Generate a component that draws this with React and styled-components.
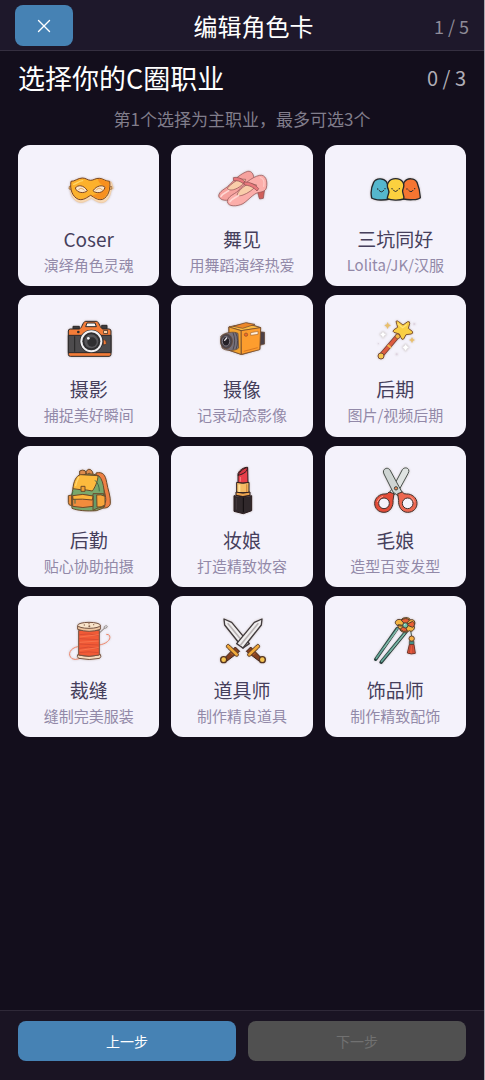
import React, { useState } from 'react';
import styled, { createGlobalStyle } from 'styled-components';
import { X } from 'lucide-react';

const MaskIcon = () => (
  <svg viewBox="158 69 156 156">
    <path d="M184 128C194 126 205 118 217 118C228 118 233 124 243 124C252 124 260 115 272 117C284 118 292 124 303 126L309 145L302 152C300 168 292 183 280 187C264 191 254 180 243 175C232 180 220 191 204 186C188 180 180 163 180 150Z" fill="#f7d9b5" stroke="#f3c99a" strokeWidth="2" />
    <path d="M177 139L184 141V149L176 147ZM304 139L297 141V149L305 147Z" fill="#f3c178" stroke="#8a5a35" strokeWidth="2" />
    <path d="M182 124C192 125 203 114 216 114C227 114 232 121 241 121C250 121 256 114 267 115C279 116 285 124 298 124C301 146 295 170 277 178C262 182 252 172 241 166C230 172 220 182 204 178C186 170 178 148 182 124Z" fill="#fcb12c" stroke="#7a4424" strokeWidth="3" strokeLinejoin="round" />
    <path d="M263 117C279 117 285 125 296 126C298 146 292 168 276 176C263 179 254 171 246 167C258 160 284 158 282 144C280 134 264 132 263 117Z" fill="#f8901f" />
    <path d="M190 133C198 131 206 123 217 122" fill="none" stroke="#ffd76a" strokeWidth="4" strokeLinecap="round" />
    <path d="M195 144C202 134 220 134 231 152C222 161 200 160 195 144ZM284 142C276 134 260 136 248 152C257 162 280 160 284 142Z" fill="#fbe7cb" stroke="#7a4424" strokeWidth="3" />
    <path d="M204 150C210 143 216 144 222 151M257 151C263 143 270 143 276 150" fill="none" stroke="#e2a25e" strokeWidth="3" />
  </svg>
);

const ShoesIcon = () => (
  <svg viewBox="153 69 156 156">
    <g stroke="#8a4a4d" strokeWidth="2" strokeLinejoin="round">
      <path d="M161 168C162 153 180 148 192 136C208 119 228 100 248 94C259 92 266 102 266 113L262 134L235 150L202 175C188 185 164 182 161 168Z" fill="#f6a29e" />
      <path d="M188 143C198 133 210 123 224 117L242 118C238 132 222 144 206 149C197 151 186 150 188 143Z" fill="#f9cda9" />
      <path d="M205 113C218 110 232 116 239 125L235 131C226 124 216 121 206 122Z" fill="#e9797c" />
      <path d="M277 155L299 147L295 175L284 177C280 170 281 163 277 155Z" fill="#d0605b" />
      <path d="M187 185C188 168 207 164 219 153C235 134 260 111 284 106C302 103 309 123 304 144C301 155 288 156 279 158C264 162 252 179 234 191C216 200 189 201 187 185Z" fill="#fbaeaa" />
      <path d="M217 162C223 149 238 137 254 130L275 135C265 149 248 160 234 165C226 168 215 169 217 162Z" fill="#f9cda9" />
      <path d="M237 126C254 125 272 134 281 146L276 153C265 141 252 136 238 135Z" fill="#e9797c" />
    </g>
    <path d="M168 169C172 160 183 158 191 152M195 185C200 175 212 173 221 166" fill="none" stroke="#ffd7d3" strokeWidth="5" strokeLinecap="round" />
    <path d="M286 113C296 115 299 126 296 139" fill="none" stroke="#fdc8c4" strokeWidth="4" strokeLinecap="round" />
  </svg>
);

const FriendsIcon = () => (
  <svg viewBox="154 69 156 156">
    <g stroke="#25292d" strokeWidth="4" strokeLinejoin="round">
      <path d="M162 174C159 160 162 139 168 127C175 114 197 113 206 125C213 137 216 160 216 177C202 181 174 182 162 174Z" fill="#55b7cd" />
      <path d="M258 177C252 161 251 140 260 126C268 113 291 113 298 127C303 139 307 158 308 173C300 180 274 181 258 177Z" fill="#f57531" />
      <path d="M209 176C209 164 218 158 212 148C204 133 214 116 234 116C254 116 263 132 256 147C250 158 262 165 258 177C244 182 221 181 209 176Z" fill="#fbd13f" />
    </g>
    <g fill="none" stroke="#25292d" strokeWidth="3" strokeLinecap="round">
      <path d="M184 151Q192 161 198 151M227 150Q234 160 240 150M273 151Q280 160 286 151" />
    </g>
    <g fill="#25292d">
      <circle cx="180" cy="147" r="2" /><circle cx="202" cy="146" r="2" />
      <circle cx="223" cy="146" r="2" /><circle cx="245" cy="146" r="2" />
      <circle cx="268" cy="147" r="2" /><circle cx="291" cy="146" r="2" />
    </g>
  </svg>
);

const CameraIcon = () => (
  <svg viewBox="158 69 156 156">
    <g stroke="#2c2a2b" strokeWidth="3" strokeLinejoin="round">
      <path d="M188 109H207V117H188ZM274 106H290V118H274Z" fill="#3f3d3e" />
      <path d="M174 123Q174 117 180 117H206C215 117 217 94 226 94H258C267 94 269 117 278 117H296Q302 117 302 123V193Q302 199 296 199H180Q174 199 174 193Z" fill="#f47c38" />
      <path d="M174 136H302V188H174Z" fill="#4d4b4d" />
      <path d="M230 99H254L258 110H226Z" fill="#faf6f3" />
    </g>
    <path d="M193 139V185" stroke="#252425" strokeWidth="3" />
    <circle cx="204" cy="126" r="4" fill="#2c2a2b" />
    <rect x="280" y="122" width="12" height="8" fill="#ffd3a7" stroke="#2c2a2b" strokeWidth="2" />
    <path d="M279 148Q289 150 288 160Q286 165 279 165Z" fill="#f47c38" stroke="#2c2a2b" strokeWidth="2" />
    <circle cx="243" cy="154" r="35" fill="#2c2a2b" />
    <circle cx="243" cy="154" r="33" fill="#f1f0f2" />
    <circle cx="243" cy="154" r="27" fill="#2f2e30" />
    <circle cx="243" cy="154" r="21" fill="#565558" />
    <circle cx="245" cy="156" r="14" fill="#2f2e30" />
    <circle cx="234" cy="145" r="4" fill="#f4f4f7" />
  </svg>
);

const CamcorderIcon = () => (
  <svg viewBox="153 69 156 156">
    <g stroke="#67452f" strokeWidth="2" strokeLinejoin="round">
      <path d="M284 125L299 127V162L284 166Z" fill="#4c4147" />
      <path d="M191 111L246 99L287 113L285 178L230 194L192 181Z" fill="#e98527" />
      <path d="M192 111L246 101L287 113L230 122Z" fill="#fbba43" />
      <path d="M228 122L287 113L284 179L229 193Z" fill="#fd9d2e" />
      <path d="M192 111L228 122V193L193 181Z" fill="#f1a331" />
      <path d="M205 109L242 98L270 103L233 115Z" fill="#ec872a" />
      <path d="M167 139C177 127 208 123 219 130L221 174C211 184 182 184 171 174Z" fill="#77717a" />
      <ellipse cx="184" cy="154" rx="18" ry="22" fill="#4b454d" />
    </g>
    <path d="M204 128Q214 152 204 179M212 128Q223 151 213 178" fill="none" stroke="#4c464d" strokeWidth="3" />
    <ellipse cx="183" cy="154" rx="11" ry="14" fill="#242027" stroke="#a39ba4" strokeWidth="2" />
    <path d="M179 151L185 144" stroke="#e7e3e9" strokeWidth="4" strokeLinecap="round" />
    <circle cx="243" cy="134" r="5" fill="#f36b25" stroke="#8b4e28" strokeWidth="2" />
    <path d="M257 128L279 124V133L257 136Z" fill="#fff0dc" stroke="#a86a35" strokeWidth="2" />
    <path d="M236 184L278 173" stroke="#d97722" strokeWidth="3" />
  </svg>
);

const WandIcon = () => (
  <svg viewBox="154 69 156 156">
    <path d="M190 197L240 138" stroke="#784138" strokeWidth="15" strokeLinecap="round" />
    <path d="M190 197L240 138" stroke="#dd5c40" strokeWidth="10" />
    <path d="M210 165L220 173" stroke="#f5b74a" strokeWidth="6" />
    <circle cx="190" cy="198" r="9" fill="#f6c64d" stroke="#784a38" strokeWidth="3" />
    <circle cx="240" cy="139" r="7" fill="#f5b743" stroke="#784a38" strokeWidth="2" />
    <path d="M235 94Q239 91 243 95L256 105L270 95Q277 93 276 101L272 115L284 124Q288 131 280 132L265 134L258 147Q252 151 250 143L245 132L229 127Q223 124 229 119L240 112Z" fill="#f9cf45" stroke="#805332" strokeWidth="3" strokeLinejoin="round" />
    <path d="M241 102L255 113L266 105" fill="none" stroke="#ffe27a" strokeWidth="4" strokeLinecap="round" />
    <path d="M210 96L213 103L220 106L213 110L210 117L206 110L200 106L207 103ZM283 141L286 147L292 150L286 153L283 160L280 153L274 150L280 147Z" fill="#e9bf6c" />
    <path d="M196 124L200 130L207 133L200 137L196 145L192 137L186 133L192 130ZM264 161L268 168L275 172L268 176L264 184L259 176L253 172L260 168Z" fill="#fff" stroke="#dedbe0" strokeWidth="2" />
    <g fill="#ded3e1"><circle cx="290" cy="102" r="3" /><circle cx="182" cy="161" r="2" /><circle cx="237" cy="193" r="3" /></g>
  </svg>
);

const BackpackIcon = () => (
  <svg viewBox="158 69 156 156">
    <g stroke="#6b4a2a" strokeWidth="3" strokeLinejoin="round">
      <path d="M257 96C279 91 285 103 289 124C292 145 302 166 300 188C297 201 284 202 273 201L271 192C282 192 288 186 286 170C284 150 270 114 257 110Z" fill="#ee8044" />
      <path d="M208 103V90Q216 85 224 89L230 101ZM225 102Q229 80 241 86Q248 90 249 103L241 103Q236 89 232 103Z" fill="#dd8b4c" />
      <path d="M197 115C209 97 247 95 266 105C284 123 282 166 283 196Q279 203 258 209C230 211 202 209 185 202C183 181 182 149 197 115Z" fill="#79a76c" />
      <path d="M248 158H280L283 196L260 202L248 208Z" fill="#659a68" />
      <path d="M259 162Q272 159 284 166V192Q273 200 260 198Z" fill="#f6a63b" />
      <path d="M174 164L184 162V194Q174 194 174 184Z" fill="#ee9340" />
      <path d="M188 143C189 124 197 103 211 101L263 104C263 120 253 141 246 150L229 147Q212 147 188 143Z" fill="#fcba3d" />
      <path d="M187 165Q217 157 248 165V196Q218 203 187 196Z" fill="#f28c3d" />
      <path d="M187 164Q217 156 248 165L246 177Q216 173 188 175Z" fill="#fcb43c" />
      <path d="M212 136H224V151H212Z" fill="#f3a033" />
    </g>
    <path d="M194 175V188M254 118Q267 129 267 151M188 151L184 162" fill="none" stroke="#3e6e4c" strokeWidth="3" />
    <path d="M205 109Q199 120 196 134" fill="none" stroke="#ffd56e" strokeWidth="4" strokeLinecap="round" />
  </svg>
);

const LipstickIcon = () => (
  <svg viewBox="153 69 156 156">
    <g stroke="#2b1c1e" strokeWidth="3" strokeLinejoin="round">
      <path d="M219 98C222 88 237 78 248 79L249 126H219Z" fill="#e83f49" />
      <path d="M219 103C225 89 240 80 247 80C249 90 237 99 219 103Z" fill="#d93843" />
      <path d="M215 124Q233 130 252 124V155H215Z" fill="#f5bb65" />
      <path d="M213 153Q233 160 255 153V163Q233 170 213 163Z" fill="#eaa34f" />
      <path d="M207 164Q233 171 260 164V209L235 218L207 211Z" fill="#30282b" />
    </g>
    <path d="M223 131V153" stroke="#ffe09a" strokeWidth="6" />
    <path d="M245 130V153" stroke="#d98c3f" strokeWidth="4" />
    <path d="M235 170V214" stroke="#120d0f" strokeWidth="3" />
    <path d="M214 171V206" stroke="#453a3e" strokeWidth="3" />
    <path d="M226 108V122" stroke="#fa8282" strokeWidth="3" />
  </svg>
);

const ScissorsIcon = () => (
  <svg viewBox="154 69 156 156">
    <g stroke="#48504c" strokeWidth="3" strokeLinejoin="round">
      <path d="M254 86C259 79 269 79 273 86Q275 91 271 98L242 151L224 165L215 155L225 141Z" fill="#dfe3e1" />
      <path d="M198 88C203 80 212 80 217 87L244 137L254 155L242 165L226 153L199 99Q196 93 198 88Z" fill="#cfd5d3" />
    </g>
    <g stroke="#44302c" strokeWidth="3">
      <path d="M214 153L229 158L226 178C228 195 218 214 199 214C182 214 171 202 171 187C171 170 187 158 202 159Q210 160 214 153Z" fill="#e34c38" />
      <path d="M254 153L240 158L243 178C241 195 251 214 270 214C287 214 298 202 298 187C298 170 282 158 267 159Q258 160 254 153Z" fill="#ec6750" />
      <circle cx="199" cy="187" r="16" fill="#f5f3fb" />
      <circle cx="270" cy="187" r="16" fill="#f5f3fb" />
    </g>
    <path d="M179 182Q183 169 195 166M279 168Q288 173 290 183" fill="none" stroke="#ff9c8b" strokeWidth="3" strokeLinecap="round" />
    <circle cx="235" cy="142" r="5" fill="#ef8b58" stroke="#3e4942" strokeWidth="3" />
  </svg>
);

const ThreadIcon = () => (
  <svg viewBox="158 69 156 156">
    <path d="M202 167C179 171 170 191 185 203Q193 208 207 203M267 162C287 159 302 147 298 135Q296 129 289 130" fill="none" stroke="#ee866c" strokeWidth="3" strokeLinecap="round" />
    <path d="M264 129L284 110" stroke="#77706c" strokeWidth="3" />
    <ellipse cx="286" cy="108" rx="5" ry="3" fill="#f5f3fb" stroke="#77706c" strokeWidth="2" transform="rotate(-25 286 108)" />
    <g stroke="#755241" strokeWidth="3" strokeLinejoin="round">
      <path d="M202 191Q237 201 270 190Q274 197 268 202Q237 209 205 202Q199 197 202 191Z" fill="#f6dabd" />
      <path d="M205 118H267V192Q237 200 205 192Z" fill="#f15a36" />
      <path d="M202 105V115Q237 127 270 115V103Z" fill="#edc5a0" />
      <ellipse cx="236" cy="103" rx="34" ry="9" fill="#f8e3c9" />
    </g>
    <path d="M207 131Q237 125 265 134M207 143L265 146M207 159L265 162M207 172Q233 164 265 173M207 185Q235 180 265 185" fill="none" stroke="#cc4630" strokeWidth="2" />
    <path d="M208 138L265 131M208 154L265 150M208 178L265 170" stroke="#fb8058" strokeWidth="2" />
    <g fill="#8a6550"><circle cx="222" cy="102" r="2" /><circle cx="237" cy="106" r="3" /><circle cx="250" cy="101" r="2" /><circle cx="236" cy="98" r="2" /></g>
  </svg>
);

const Sword = () => (
  <>
    <path d="M291 84L289 102L234 171L215 158L268 94Z" fill="#f0eeee" stroke="#413a3c" strokeWidth="4" strokeLinejoin="round" />
    <path d="M280 97L226 163" stroke="#b9b3b4" strokeWidth="5" />
    <path d="M211 168L224 181L186 210L178 202Z" fill="#85401f" stroke="#3f251d" strokeWidth="3" />
    <path d="M196 185L203 192" stroke="#b4622f" strokeWidth="3" />
    <path d="M190 160C184 161 182 167 187 171L211 194C217 199 223 193 219 187L196 165Z" fill="#f0a93a" stroke="#553420" strokeWidth="3" />
    <circle cx="176" cy="206" r="9" fill="#f6c451" stroke="#553420" strokeWidth="4" />
  </>
);

const SwordsIcon = () => (
  <svg viewBox="153 69 156 156">
    <g transform="matrix(-1 0 0 1 468 0)"><Sword /></g>
    <Sword />
  </svg>
);

const HairpinIcon = () => (
  <svg viewBox="154 69 156 156">
    <g strokeLinecap="round">
      <path d="M238 113L174 205M266 121L190 214" stroke="#29413f" strokeWidth="10" />
      <path d="M239 113L176 202M266 121L192 211" stroke="#66a697" strokeWidth="5" />
      <path d="M237 118L199 171M260 130L217 183" stroke="#a3cdbd" strokeWidth="2" />
    </g>
    <path d="M279 119L282 137" stroke="#3e554a" strokeWidth="3" />
    <circle cx="282" cy="143" r="8" fill="#f5af43" stroke="#654231" strokeWidth="3" />
    <path d="M275 151H289V161H275Z" fill="#448f86" stroke="#493d33" strokeWidth="2" />
    <path d="M275 161H289L293 187Q281 191 269 186Z" fill="#e6583b" stroke="#6d372d" strokeWidth="3" />
    <path d="M278 164L275 185M285 164L286 186" stroke="#9e3930" strokeWidth="2" />
    <g stroke="#533b2c" strokeWidth="3">
      <path d="M261 104C246 107 232 103 233 94C235 84 247 84 251 87C253 78 276 77 278 87C288 82 296 94 289 104C294 114 283 125 275 119C264 128 246 123 247 114C241 112 239 104 242 101Z" fill="#f4b441" />
      <path d="M263 101L251 88Q263 78 276 87ZM261 103L247 115Q257 125 269 120ZM265 101L285 91Q296 99 285 109Z" fill="#e96035" />
      <circle cx="263" cy="103" r="8" fill="#6bc3aa" />
    </g>
    <circle cx="261" cy="101" r="2" fill="#d8f3df" />
  </svg>
);

const jobs = [
  { name: 'Coser', desc: '演绎角色灵魂', Icon: MaskIcon },
  { name: '舞见', desc: '用舞蹈演绎热爱', Icon: ShoesIcon },
  { name: '三坑同好', desc: 'Lolita/JK/汉服', Icon: FriendsIcon },
  { name: '摄影', desc: '捕捉美好瞬间', Icon: CameraIcon },
  { name: '摄像', desc: '记录动态影像', Icon: CamcorderIcon },
  { name: '后期', desc: '图片/视频后期', Icon: WandIcon },
  { name: '后勤', desc: '贴心协助拍摄', Icon: BackpackIcon },
  { name: '妆娘', desc: '打造精致妆容', Icon: LipstickIcon },
  { name: '毛娘', desc: '造型百变发型', Icon: ScissorsIcon },
  { name: '裁缝', desc: '缝制完美服装', Icon: ThreadIcon },
  { name: '道具师', desc: '制作精良道具', Icon: SwordsIcon },
  { name: '饰品师', desc: '制作精致配饰', Icon: HairpinIcon },
];

function App() {
  const [picked, setPicked] = useState([]);

  const toggle = (name) => {
    if (picked.includes(name)) {
      setPicked(picked.filter((p) => p !== name));
    } else if (picked.length < 3) {
      setPicked([...picked, name]);
    }
  };

  return (
    <Page>
      <GlobalStyle />
      <Header>
        <CloseButton type="button" aria-label="关闭">
          <X size={22} strokeWidth={1.5} />
        </CloseButton>
        <Title>编辑角色卡</Title>
        <Step>1 / 5</Step>
      </Header>

      <Main>
        <SectionHead>
          <SectionTitle>选择你的C圈职业</SectionTitle>
          <Count>{picked.length} / 3</Count>
        </SectionHead>
        <Hint>第1个选择为主职业，最多可选3个</Hint>
        <Grid>
          {jobs.map(({ name, desc, Icon }) => (
            <Card
              key={name}
              type="button"
              $active={picked.includes(name)}
              aria-pressed={picked.includes(name)}
              onClick={() => toggle(name)}
            >
              <CardIcon aria-hidden="true"><Icon /></CardIcon>
              <CardName>{name}</CardName>
              <CardDesc>{desc}</CardDesc>
            </Card>
          ))}
        </Grid>
      </Main>

      <Footer>
        <FooterButton type="button">上一步</FooterButton>
        <FooterButton type="button" disabled={picked.length === 0}>下一步</FooterButton>
      </Footer>
    </Page>
  );
}

const GlobalStyle = createGlobalStyle`
  * {
    box-sizing: border-box;
  }

  body {
    margin: 0;
    background: #130e1c;
  }

  body, button {
    font-family: "Noto Sans CJK SC", "Noto Sans", sans-serif;
  }
`;

const Page = styled.div`
  display: flex;
  flex-direction: column;
  min-height: 100vh;
  background: #130e1c;
  color: #fff;
  border-right: 1px solid #aaa7ae;
`;

const Header = styled.header`
  display: flex;
  align-items: center;
  justify-content: space-between;
  padding: 5px 15px 4px;
  background: #1e182b;
  border-bottom: 1px solid #352f40;
`;

const CloseButton = styled.button`
  display: flex;
  align-items: center;
  justify-content: center;
  width: 58px;
  height: 41px;
  padding: 0;
  border: none;
  border-radius: 8px;
  background: #4682b4;
  color: #fff;
  cursor: pointer;
`;

const Title = styled.h1`
  margin: 0;
  font-size: 24px;
  font-weight: 400;
  line-height: 34px;
`;

const Step = styled.span`
  font-size: 18px;
  line-height: 24px;
  color: #8f8b98;
`;

const Main = styled.main`
  flex: 1;
  padding: 9px 18px 18px;
`;

const SectionHead = styled.div`
  display: flex;
  align-items: center;
  justify-content: space-between;
`;

const SectionTitle = styled.h2`
  margin: 0;
  font-size: 27px;
  font-weight: 400;
  line-height: 36px;
`;

const Count = styled.span`
  font-size: 20px;
  line-height: 24px;
  color: #b0adb6;
`;

const Hint = styled.p`
  margin: 11px 0 14px;
  font-size: 17px;
  line-height: 24px;
  text-align: center;
  color: #817d8b;
`;

const Grid = styled.div`
  display: grid;
  grid-template-columns: repeat(3, 1fr);
  gap: 9px 12px;
`;

const Card = styled.button`
  display: flex;
  flex-direction: column;
  align-items: center;
  aspect-ratio: 1;
  min-width: 0;
  padding: 18px 0 0;
  border: none;
  border-radius: 12px;
  background: #f4f2fb;
  box-shadow: ${(props) => (props.$active ? '0 0 0 3px #4682b4' : 'none')};
  cursor: pointer;
`;

const CardIcon = styled.span`
  width: 52px;
  height: 52px;

  svg {
    display: block;
    width: 100%;
    height: 100%;
    filter: drop-shadow(0 0 1px rgba(120, 95, 70, 0.35));
  }
`;

const CardName = styled.span`
  margin-top: 11px;
  font-size: 19px;
  line-height: 26px;
  color: #463f5c;
`;

const CardDesc = styled.span`
  margin-top: 3px;
  font-size: 15px;
  line-height: 20px;
  white-space: nowrap;
  color: #9289a8;
`;

const Footer = styled.footer`
  display: flex;
  gap: 12px;
  padding: 10px 18px 19px;
  background: #1a1423;
  border-top: 1px solid #2f2938;
`;

const FooterButton = styled.button`
  flex: 1;
  height: 40px;
  border: none;
  border-radius: 8px;
  background: #4682b4;
  color: #fff;
  font-size: 14px;
  cursor: pointer;

  &:disabled {
    background: #505050;
    color: #717171;
    cursor: default;
  }
`;

export default App;
